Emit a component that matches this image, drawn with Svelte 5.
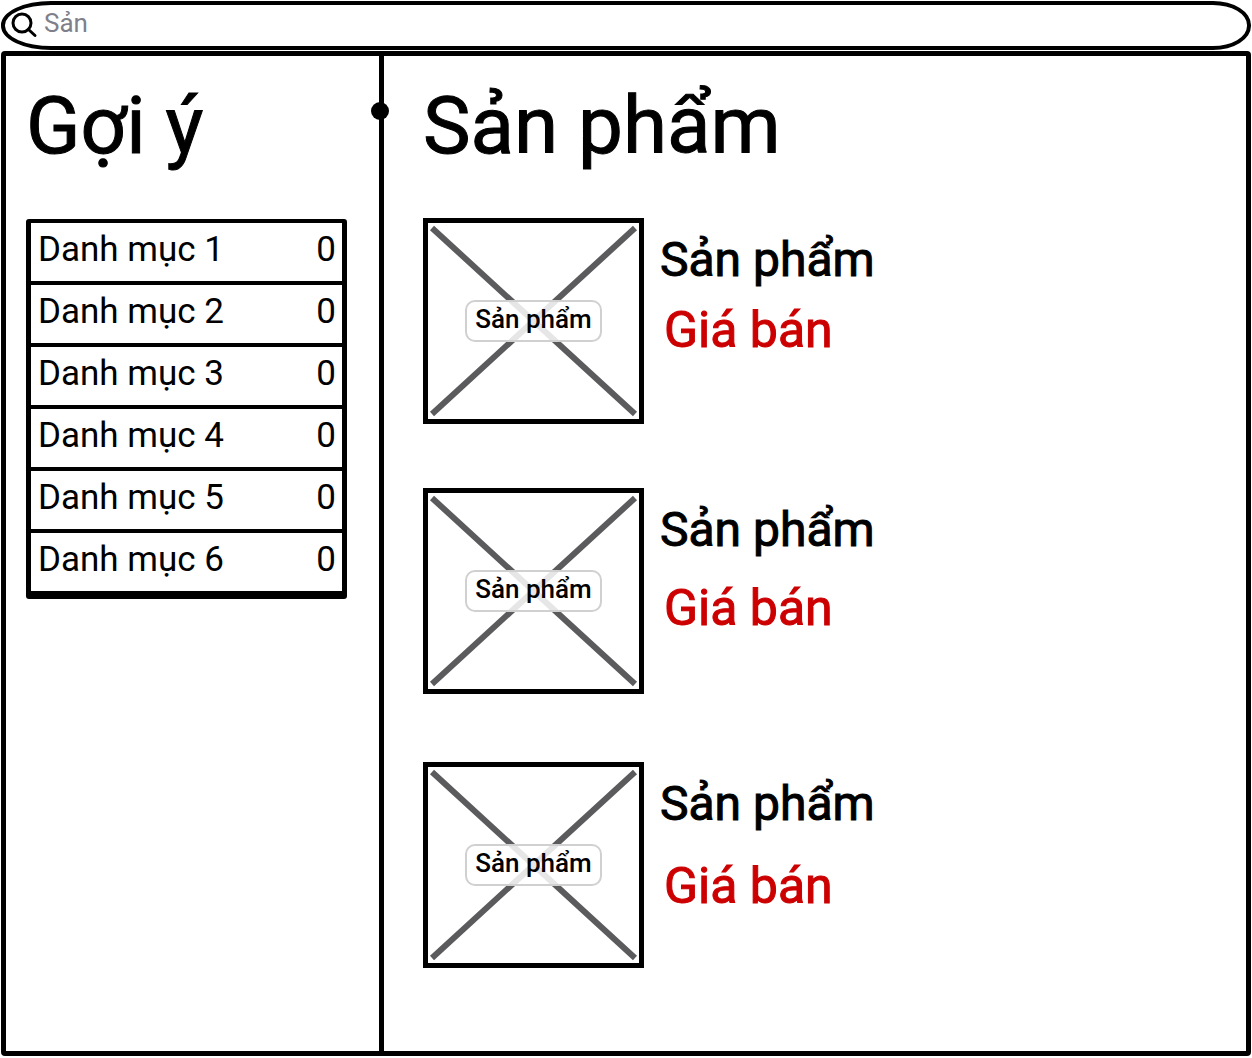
<script>
  const categories = [1, 2, 3, 4, 5, 6].map((n) => ({ name: `Danh mục ${n}`, count: 0 }));
  const products = [1, 2, 3].map((id) => ({ id, name: 'Sản phẩm', price: 'Giá bán' }));
</script>

<div class="page">
  <form class="search" role="search">
    <label for="query" aria-label="Sản phẩm">
      <svg viewBox="0 0 26 26" aria-hidden="true">
        <circle cx="10" cy="10" r="9" />
        <path d="M16.5 16.5 23 22.5" />
      </svg>
    </label>
    <input id="query" type="search" placeholder="Sản" />
  </form>

  <div class="frame">
    <aside>
      <h1>Gợi ý</h1>
      <ul class="categories">
        {#each categories as category}
          <li>
            <a href="#products"><span>{category.name}</span><span>{category.count}</span></a>
          </li>
        {/each}
      </ul>
    </aside>

    <div class="divider"><span class="knob"></span></div>

    <main id="products">
      <h1>Sản phẩm</h1>
      <div class="products">
        {#each products as product (product.id)}
          <article>
            <div class="picture">
              <svg viewBox="0 0 211 196" preserveAspectRatio="none" aria-hidden="true">
                <path d="M4 5 207 191M207 5 4 191" />
              </svg>
              <span class="caption">{product.name}</span>
            </div>
            <div class="details">
              <h2>{product.name}</h2>
              <p>{product.price}</p>
            </div>
          </article>
        {/each}
      </div>
    </main>
  </div>
</div>

<style>
  :global(body) {
    margin: 0;
    background: #fff;
  }

  .page {
    box-sizing: border-box;
    display: flex;
    flex-direction: column;
    gap: 1px;
    min-height: 100vh;
    padding: 1px 1px 2px;
    color: #000;
    font-family: Roboto, 'Liberation Sans', sans-serif;
  }

  .search {
    box-sizing: border-box;
    display: flex;
    align-items: center;
    gap: 6px;
    height: 49px;
    padding: 0 28px 0 7px;
    border: 4px solid #000;
    border-radius: 50px 38px 38px 50px / 24px;
  }

  .search label {
    display: flex;
  }

  .search svg {
    width: 26px;
    height: 26px;
    overflow: visible;
    fill: none;
    stroke: #000;
    stroke-width: 3;
    stroke-linecap: round;
  }

  .search input {
    flex: 1;
    min-width: 0;
    padding: 0 0 6px;
    border: 0;
    outline: 0;
    background: none;
    color: #000;
    font: 400 26px/32px Roboto, 'Liberation Sans', sans-serif;
  }

  .search input::placeholder {
    color: #80808a;
    opacity: 1;
  }

  .frame {
    flex: 1;
    display: flex;
    border: 5px solid #000;
    border-radius: 4px;
  }

  aside {
    box-sizing: border-box;
    width: 373px;
    padding: 23px 32px 0 20px;
  }

  h1,
  h2,
  p {
    margin: 0;
    font-weight: 400;
    -webkit-text-stroke: 1px currentColor;
  }

  h1 {
    font-size: 80px;
    line-height: 94px;
  }

  .categories {
    margin: 46px 0 0;
    padding: 0;
    border: solid #000;
    border-width: 4px 5px;
    border-radius: 3px;
    list-style: none;
  }

  .categories li {
    border-bottom: 4px solid #000;
  }

  .categories a {
    display: flex;
    justify-content: space-between;
    padding: 7px 6px 11px 7px;
    color: inherit;
    font-size: 35px;
    line-height: 40px;
    text-decoration: none;
  }

  .divider {
    position: relative;
    width: 5px;
    background: #000;
  }

  .knob {
    position: absolute;
    top: 46px;
    left: -8px;
    width: 18px;
    height: 18px;
    border-radius: 50%;
    background: #000;
  }

  main {
    flex: 1;
    min-width: 0;
    padding: 23px 24px 0 39px;
  }

  .products {
    display: grid;
    gap: 64px;
    margin-top: 45px;
  }

  article {
    display: flex;
    gap: 16px;
  }

  article:last-child {
    padding-top: 4px;
  }

  .picture {
    position: relative;
    display: flex;
    align-items: center;
    justify-content: center;
    box-sizing: border-box;
    width: 221px;
    height: 206px;
    border: 5px solid #000;
  }

  .picture svg {
    position: absolute;
    inset: 0;
    width: 100%;
    height: 100%;
    fill: none;
    stroke: #5b5b5d;
    stroke-width: 6;
  }

  .caption {
    position: relative;
    padding: 2px 8px 6px;
    border: 2px solid #d0d0d0;
    border-radius: 10px;
    background: rgb(255 255 255 / 85%);
    font-size: 26px;
    font-weight: 500;
    line-height: 30px;
  }

  .details {
    display: flex;
    flex-direction: column;
    gap: 12px;
    padding-top: 13px;
  }

  article:nth-child(2) .details {
    gap: 20px;
  }

  article:nth-child(3) .details {
    gap: 24px;
  }

  h2,
  p {
    font-size: 48px;
    line-height: 58px;
  }

  p {
    padding-left: 4px;
    color: #c00;
    font-size: 50px;
  }
</style>
